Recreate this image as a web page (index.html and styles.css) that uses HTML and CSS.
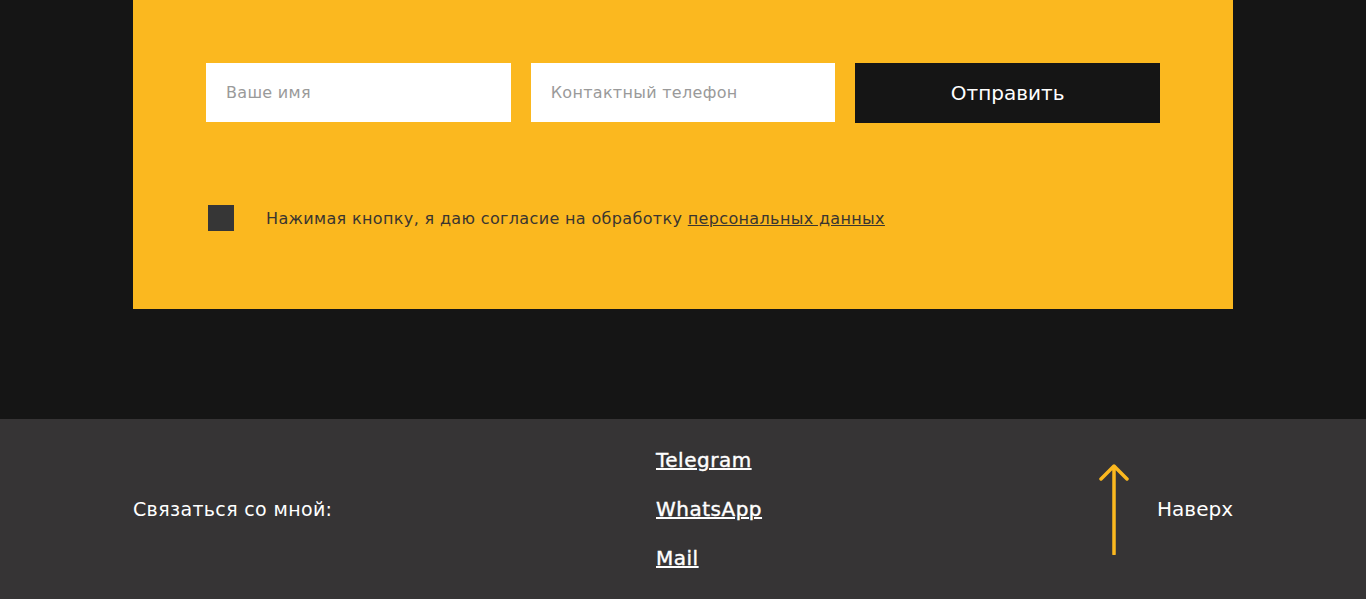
FILE: index.html
```html
<!DOCTYPE html>
<html lang="ru">
<head>
    <meta charset="UTF-8">
    <meta name="viewport" content="width=device-width, initial-scale=1.0">
    <title>Заявка</title>
    <link rel="stylesheet" href="styles.css">
</head>
<body>
    <section class="order">
        <div class="order-panel">
            <form class="order-form">
                <input type="text" class="order-input" placeholder="Ваше имя">
                <input type="tel" class="order-input" placeholder="Контактный телефон">
                <button type="button" class="order-button">Отправить</button>
            </form>
            <label class="agree">
                <span class="agree-box"></span>
                <span class="agree-text">Нажимая кнопку, я даю согласие на обработку <a href="#" class="agree-link">персональных данных</a></span>
            </label>
        </div>
    </section>
    <footer class="footer">
        <div class="footer-inner">
            <div class="footer-title">Связаться со мной:</div>
            <div class="footer-links">
                <a href="#" class="footer-link">Telegram</a>
                <a href="#" class="footer-link">WhatsApp</a>
                <a href="#" class="footer-link">Mail</a>
            </div>
            <a href="#" class="footer-up">
                <svg class="up-arrow" width="32" height="92" viewBox="0 0 32 92">
                    <path d="M16 91 V3 M3 16 L16 3 L29 16" fill="none" stroke="#fbb81f" stroke-width="3.5" stroke-linecap="round" stroke-linejoin="round"/>
                </svg>
                <span>Наверх</span>
            </a>
        </div>
    </footer>
</body>
</html>
```

FILE: styles.css
```css
* {
    margin: 0;
    padding: 0;
    box-sizing: border-box;
}

body {
    font-family: "DejaVu Sans", "Noto Sans", sans-serif;
    background-color: #151515;
    color: #ffffff;
}

.order {
    width: 1100px;
    margin: 0 auto;
    padding-bottom: 110px;
}

.order-panel {
    background: #fbb81f;
    padding: 63px 73px 78px;
}

.order-form {
    display: grid;
    grid-template-columns: 1fr 1fr 1fr;
    gap: 20px;
    align-items: start;
}

.order-input {
    height: 59px;
    border: none;
    background: #ffffff;
    padding: 0 20px;
    font-family: inherit;
    font-size: 16px;
    letter-spacing: 0.3px;
    color: #333333;
    outline: none;
}

.order-input::placeholder {
    color: #9a9a9a;
}

.order-button {
    height: 60px;
    border: none;
    background: #151515;
    color: #ffffff;
    font-family: inherit;
    font-size: 20px;
    cursor: pointer;
}

.agree {
    display: flex;
    align-items: center;
    margin-top: 82px;
    padding-left: 2px;
}

.agree-box {
    width: 26px;
    height: 26px;
    background: #363636;
    flex-shrink: 0;
}

.agree-text {
    margin-left: 32px;
    font-size: 16px;
    letter-spacing: 0.35px;
    color: #3a3530;
}

.agree-link {
    color: #3a3530;
}

.footer {
    background: #363435;
    height: 180px;
}

.footer-inner {
    width: 1100px;
    height: 100%;
    margin: 0 auto;
    display: grid;
    grid-template-columns: 523px 1fr auto;
    align-items: center;
}

.footer-title {
    font-size: 19px;
    letter-spacing: 0.35px;
}

.footer-links {
    display: flex;
    flex-direction: column;
    gap: 25px;
}

.footer-link {
    color: #ffffff;
    font-size: 20px;
    line-height: 24px;
    letter-spacing: 0.5px;
    -webkit-text-stroke: 0.4px #ffffff;
}

.footer-up {
    display: flex;
    align-items: center;
    gap: 27px;
    color: #ffffff;
    text-decoration: none;
    font-size: 20px;
}

.up-arrow {
    display: block;
}
```
